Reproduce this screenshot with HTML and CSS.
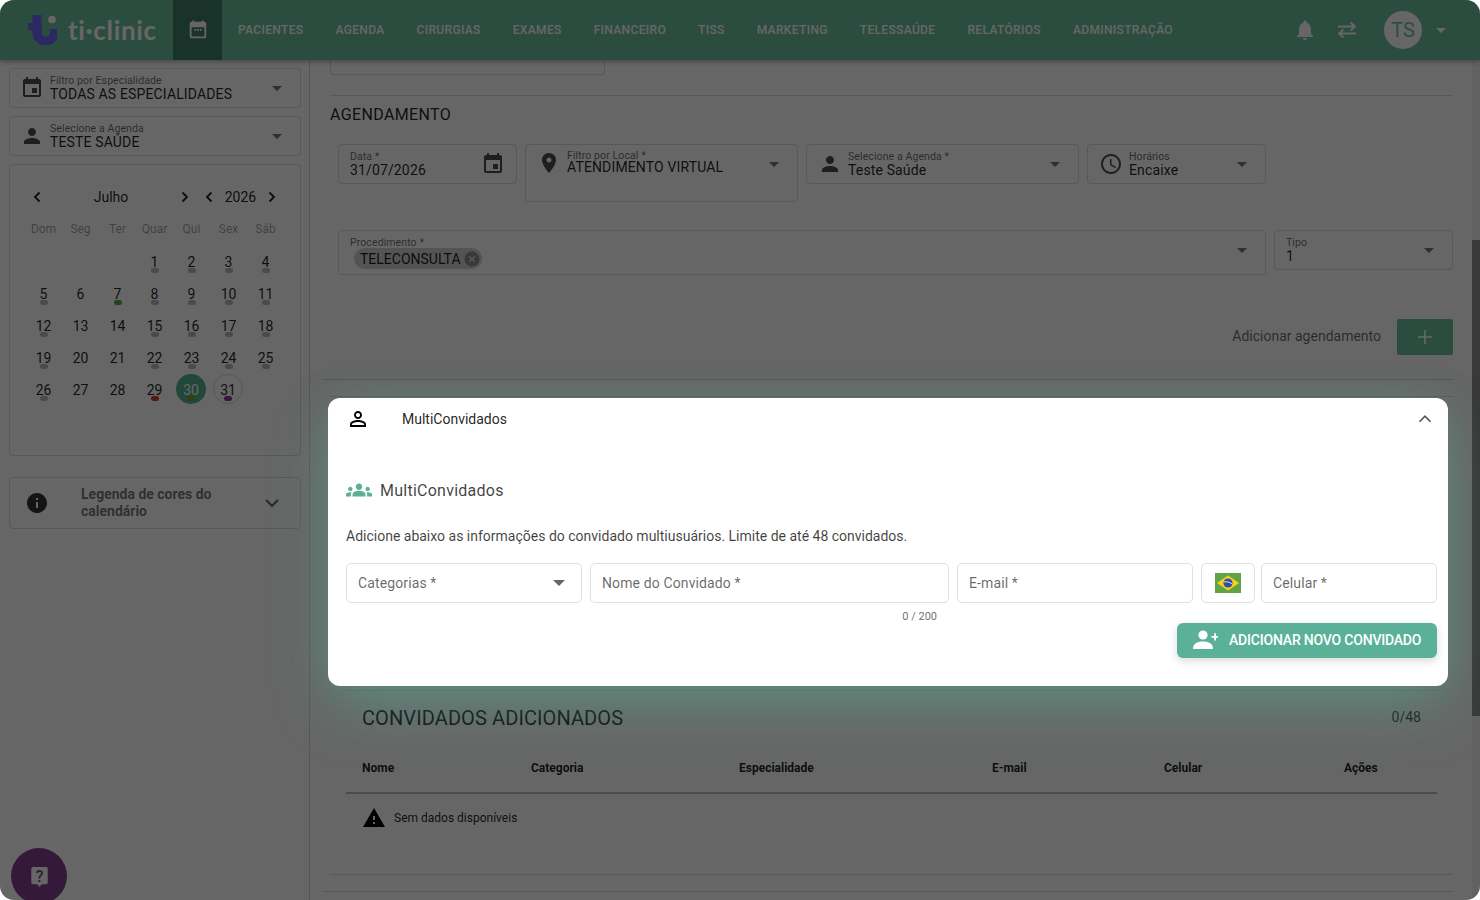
FILE: index.html
```html
<!DOCTYPE html>
<html lang="pt-BR">
<head>
<meta charset="utf-8">
<title>ti-clinic</title>
<link rel="stylesheet" href="styles.css">
</head>
<body>
<svg class="sprite" aria-hidden="true">
  <symbol id="i-event" viewBox="0 0 24 24"><path d="M17 12h-5v5h5v-5zM16 1v2H8V1H6v2H5c-1.11 0-1.99.9-1.99 2L3 19c0 1.1.89 2 2 2h14c1.1 0 2-.9 2-2V5c0-1.1-.9-2-2-2h-1V1h-2zm3 18H5V8h14v11z"/></symbol>
  <symbol id="i-person" viewBox="0 0 24 24"><path d="M12 12c2.21 0 4-1.79 4-4s-1.79-4-4-4-4 1.79-4 4 1.79 4 4 4zm0 2c-2.67 0-8 1.34-8 4v2h16v-2c0-2.66-5.33-4-8-4z"/></symbol>
  <symbol id="i-person-o" viewBox="0 0 24 24"><path d="M12 5.9c1.16 0 2.1.94 2.1 2.1s-.94 2.1-2.1 2.1S9.9 9.16 9.9 8s.94-2.1 2.1-2.1m0 9c2.97 0 6.1 1.46 6.1 2.1v1.1H5.9V17c0-.64 3.13-2.1 6.1-2.1M12 4C9.79 4 8 5.79 8 8s1.79 4 4 4 4-1.79 4-4-1.79-4-4-4zm0 9c-2.67 0-8 1.34-8 4v3h16v-3c0-2.66-5.33-4-8-4z"/></symbol>
  <symbol id="i-pin" viewBox="0 0 24 24"><path d="M12 2C8.13 2 5 5.13 5 9c0 5.25 7 13 7 13s7-7.75 7-13c0-3.87-3.13-7-7-7zm0 9.5c-1.38 0-2.5-1.12-2.5-2.5s1.12-2.5 2.5-2.5 2.5 1.12 2.5 2.5-1.12 2.5-2.5 2.5z"/></symbol>
  <symbol id="i-clock" viewBox="0 0 24 24"><path d="M11.99 2C6.47 2 2 6.48 2 12s4.47 10 9.99 10C17.52 22 22 17.52 22 12S17.52 2 11.99 2zM12 20c-4.42 0-8-3.58-8-8s3.58-8 8-8 8 3.58 8 8-3.58 8-8 8zm.5-13H11v6l5.25 3.15.75-1.23-4.5-2.67z"/></symbol>
  <symbol id="i-left" viewBox="0 0 24 24"><path d="M14.500 7.500 10 12l4.500 4.500" fill="none" stroke="currentColor" stroke-width="1.800"/></symbol>
  <symbol id="i-right" viewBox="0 0 24 24"><path d="M9.500 7.500 14 12l-4.500 4.500" fill="none" stroke="currentColor" stroke-width="1.800"/></symbol>
</svg>

<div class="app">
  <header class="nav">
    <div class="logo">
      <svg class="logo-mark" viewBox="0 0 30 30">
        <path d="M10 0V17.500a8.700 8.700 0 0 0 17.400 0V14" fill="none" stroke="#7064f5" stroke-width="9"/>
        <path d="M1 11.500H15" fill="none" stroke="#7064f5" stroke-width="7"/>
        <circle cx="25" cy="4.500" r="3.800" fill="#fff"/>
      </svg>
      <span class="logo-text">ti·clinic</span>
    </div>
    <div class="nav-cal"><svg class="ic22" viewBox="0 0 24 24" fill="#fff"><path d="M19 3h-1V1.500h-2V3H8V1.500H6V3H5a2 2 0 0 0-2 2v14a2 2 0 0 0 2 2h14a2 2 0 0 0 2-2V5a2 2 0 0 0-2-2zm0 16H5V9h14v10zM8 11h2v1.800H8zm3 0h2v1.800h-2zm3 0h2v1.800h-2z"/></svg></div>
    <nav class="nav-links">
      <a>PACIENTES</a><a>AGENDA</a><a>CIRURGIAS</a><a>EXAMES</a><a>FINANCEIRO</a><a>TISS</a><a>MARKETING</a><a>TELESSAÚDE</a><a>RELATÓRIOS</a><a>ADMINISTRAÇÃO</a>
    </nav>
    <div class="nav-right">
      <svg class="ic24 bell" viewBox="0 0 24 24"><path d="M12 22c1.100 0 2-.9 2-2h-4c0 1.100.89 2 2 2zm6-6v-5c0-3.070-1.640-5.640-4.500-6.320V4c0-.83-.67-1.500-1.500-1.500s-1.500.67-1.500 1.500v.68C7.630 5.360 6 7.920 6 11v5l-2 2v1h16v-1l-2-2z"/></svg>
      <svg class="ic24 swap" viewBox="0 0 24 24"><path d="M3 8.500h17M15.500 4.500l4.500 4-4.500 4M21 15.500H4M8.500 11.500l-4.500 4 4.500 4"/></svg>
      <div class="avatar">TS</div>
      <span class="caret caret-light"></span>
    </div>
  </header>

  <div class="body-row">
    <aside class="side">
      <div class="field side-field">
        <svg class="ic24 field-ic"><use href="#i-event"/></svg>
        <div class="field-txt"><span class="lbl">Filtro por Especialidade</span><span class="val">TODAS AS ESPECIALIDADES</span></div>
        <span class="caret"></span>
      </div>
      <div class="field side-field">
        <svg class="ic24 field-ic"><use href="#i-person"/></svg>
        <div class="field-txt"><span class="lbl">Selecione a Agenda</span><span class="val">TESTE SAÚDE</span></div>
        <span class="caret"></span>
      </div>

      <section class="cal">
        <div class="cal-head">
          <svg class="ic24"><use href="#i-left"/></svg><span>Julho</span><svg class="ic24"><use href="#i-right"/></svg><svg class="ic24"><use href="#i-left"/></svg><span>2026</span><svg class="ic24"><use href="#i-right"/></svg>
        </div>
        <div class="cal-week"><span>Dom</span><span>Seg</span><span>Ter</span><span>Quar</span><span>Qui</span><span>Sex</span><span>Sáb</span></div>
        <div class="cal-days">
          <div></div><div></div><div></div>
          <div class="day">1<i class="dot"></i></div><div class="day">2<i class="dot"></i></div><div class="day">3<i class="dot"></i></div><div class="day">4<i class="dot"></i></div>
          <div class="day">5<i class="dot"></i></div><div class="day">6</div><div class="day">7<i class="dot dot-green"></i></div><div class="day">8<i class="dot"></i></div><div class="day">9<i class="dot"></i></div><div class="day">10<i class="dot"></i></div><div class="day">11<i class="dot"></i></div>
          <div class="day">12<i class="dot"></i></div><div class="day">13</div><div class="day">14</div><div class="day">15<i class="dot"></i></div><div class="day">16<i class="dot"></i></div><div class="day">17<i class="dot"></i></div><div class="day">18<i class="dot"></i></div>
          <div class="day">19<i class="dot"></i></div><div class="day">20</div><div class="day">21</div><div class="day">22<i class="dot"></i></div><div class="day">23<i class="dot"></i></div><div class="day">24<i class="dot"></i></div><div class="day">25<i class="dot"></i></div>
          <div class="day">26<i class="dot"></i></div><div class="day">27</div><div class="day">28</div><div class="day">29<i class="dot dot-red"></i></div><div class="day day-today">30<i class="dot dot-olive"></i></div><div class="day day-sel">31<i class="dot dot-purple"></i></div>
        </div>
      </section>

      <div class="legend">
        <svg class="ic24 legend-ic" viewBox="0 0 24 24"><path d="M12 2C6.480 2 2 6.480 2 12s4.480 10 10 10 10-4.480 10-10S17.520 2 12 2zm1 15h-2v-6h2v6zm0-8h-2V7h2v2z"/></svg>
        <span class="legend-txt">Legenda de cores do calendário</span>
        <svg class="legend-chev" viewBox="0 0 24 24" fill="none" stroke="currentColor" stroke-width="2"><path d="M6 9l6 6 6-6"/></svg>
      </div>
    </aside>

    <main class="main">
      <div class="stub"></div>
      <hr class="rule rule-first">
      <h2 class="sec-title">AGENDAMENTO</h2>

      <div class="form-row form-row-1">
        <div class="field w179">
          <div class="field-txt"><span class="lbl">Data *</span><span class="val">31/07/2026</span></div>
          <svg class="ic24 date-ic"><use href="#i-event"/></svg>
        </div>
        <div class="field w273 field-tall">
          <svg class="ic24 pin-ic"><use href="#i-pin"/></svg>
          <div class="field-txt"><span class="lbl lbl-tight">Filtro por Local *</span><span class="val val-tight">ATENDIMENTO VIRTUAL</span></div>
          <span class="caret caret-high"></span>
        </div>
        <div class="field w273">
          <svg class="ic24 pin-ic"><use href="#i-person"/></svg>
          <div class="field-txt"><span class="lbl">Selecione a Agenda *</span><span class="val">Teste Saúde</span></div>
          <span class="caret"></span>
        </div>
        <div class="field w179">
          <svg class="ic24 pin-ic"><use href="#i-clock"/></svg>
          <div class="field-txt"><span class="lbl">Horários</span><span class="val">Encaixe</span></div>
          <span class="caret"></span>
        </div>
      </div>

      <div class="form-row form-row-2">
        <div class="field proc">
          <div class="field-txt"><span class="lbl">Procedimento *</span>
            <span class="chip">TELECONSULTA<svg class="chip-x" viewBox="0 0 16 16"><circle cx="8" cy="8" r="7.500" fill="#8d8d8d"/><path d="M5.200 5.200l5.600 5.600M10.800 5.200l-5.600 5.600" stroke="#ddd" stroke-width="1.400"/></svg></span>
          </div>
          <span class="caret"></span>
        </div>
        <div class="field w179">
          <div class="field-txt"><span class="lbl">Tipo</span><span class="val">1</span></div>
          <span class="caret"></span>
        </div>
      </div>

      <div class="add-row">
        <span class="add-txt">Adicionar agendamento</span>
        <button class="add-btn"><svg class="ic24" viewBox="0 0 24 24" fill="none" stroke="#fff" stroke-width="1.600"><path d="M12 5v14M5 12h14"/></svg></button>
      </div>

      <hr class="rule rule-wide rule-a">
      <hr class="rule rule-b">

      <section class="card">
        <hr class="rule rule-card">
        <div class="card-head">
          <h3>CONVIDADOS ADICIONADOS</h3>
          <span class="count">0/48</span>
        </div>
        <div class="tbl-head"><span>Nome</span><span>Categoria</span><span>Especialidade</span><span>E-mail</span><span>Celular</span><span>Ações</span></div>
        <div class="tbl-empty">
          <svg class="ic24 warn" viewBox="0 0 24 24"><path d="M1 21h22L12 2 1 21zm12-3h-2v-2h2v2zm0-4h-2v-4h2v4z"/></svg>
          <span>Sem dados disponíveis</span>
        </div>
      </section>
      <hr class="rule rule-c">
      <hr class="rule rule-wide rule-d">
    </main>

    <div class="scrollbar"><div class="thumb"></div></div>
  </div>

  <button class="fab" aria-label="Ajuda">
    <svg viewBox="0 0 20 24" class="fab-ic"><path d="M3 1h14a2 2 0 0 1 2 2v15a2 2 0 0 1-2 2h-4.500L10 23l-2.500-3H3a2 2 0 0 1-2-2V3a2 2 0 0 1 2-2z" fill="#fff"/><text x="10" y="17" text-anchor="middle" class="fab-q">?</text></svg>
  </button>

  <div class="overlay"></div>

  <div class="modal">
    <div class="modal-head">
      <svg class="ic24 modal-person"><use href="#i-person-o"/></svg>
      <span class="modal-head-txt">MultiConvidados</span>
      <svg class="modal-chev" viewBox="0 0 24 24" fill="none" stroke="#555" stroke-width="1.800"><path d="M6 15l6-6 6 6"/></svg>
    </div>
    <div class="modal-body">
      <div class="modal-title">
        <svg class="groups" viewBox="0 0 24 24" fill="#5bb197"><path d="M4 13c1.100 0 2-.9 2-2 0-1.100-.9-2-2-2s-2 .9-2 2c0 1.100.9 2 2 2zm1.130 1.100C4.760 14.040 4.390 14 4 14c-.99 0-1.930.21-2.780.58C.48 14.900 0 15.620 0 16.430V18h4.500v-1.610c0-.83.23-1.610.63-2.290zM20 13c1.100 0 2-.9 2-2 0-1.100-.9-2-2-2s-2 .9-2 2c0 1.100.9 2 2 2zm4 3.430c0-.81-.48-1.530-1.220-1.850C21.930 14.210 20.990 14 20 14c-.39 0-.76.04-1.130.1.4.68.63 1.460.63 2.290V18H24v-1.570zM16.240 13.650c-1.170-.52-2.610-.9-4.240-.9-1.630 0-3.070.39-4.240.9C6.680 14.130 6 15.210 6 16.390V18h12v-1.610c0-1.180-.68-2.260-1.760-2.740zM12 12c1.660 0 3-1.340 3-3s-1.340-3-3-3-3 1.340-3 3 1.340 3 3 3z"/></svg>
        <span>MultiConvidados</span>
      </div>
      <p class="modal-desc">Adicione abaixo as informações do convidado multiusuários. Limite de até 48 convidados.</p>
      <div class="invite-row">
        <div class="input w236"><span>Categorias *</span><span class="caret caret-dark"></span></div>
        <div class="input w359"><span>Nome do Convidado *</span></div>
        <div class="input w236"><span>E-mail *</span></div>
        <div class="input flag-box">
          <svg class="flag" viewBox="0 0 26 20"><rect width="26" height="20" fill="#5fa548"/><path d="M13 2.500 24 10 13 17.500 2 10z" fill="#fcd116"/><circle cx="13" cy="10" r="4.600" fill="#2f4fa8"/><path d="M8.700 9c3-.6 6-.1 8.500 1.900" stroke="#fff" stroke-width=".8" fill="none"/></svg>
        </div>
        <div class="input w176"><span>Celular *</span></div>
      </div>
      <div class="counter-row"><span class="counter">0 / 200</span></div>
      <div class="btn-row">
        <button class="invite-btn">
          <svg class="invite-ic" viewBox="0 0 25 20" fill="#fff"><circle cx="10" cy="5" r="4.600"/><path d="M0 19c0-5.500 4-7.500 10-7.500s10 2 10 7.500z"/><path d="M18.500 6h2.700V3.300h1.800V6h2v1.800h-2v2.700h-1.800V7.800h-2.700z"/></svg>
          ADICIONAR NOVO CONVIDADO
        </button>
      </div>
    </div>
  </div>
</div>
</body>
</html>
```

FILE: styles.css
```css
* { box-sizing: border-box; }
html, body { margin: 0; padding: 0; background: #fff; }
body { width: 1480px; height: 900px; overflow: hidden; font-family: Roboto, "Liberation Sans", sans-serif; color: rgba(0,0,0,.87); }
.sprite { display: none; }
.ic24 { width: 24px; height: 24px; flex: none; display: block; fill: currentColor; }
.ic22 { width: 22px; height: 22px; display: block; }

.app { position: relative; width: 1480px; height: 900px; overflow: hidden; border-radius: 14px; background: #fff; display: flex; flex-direction: column; }

/* nav */
.nav { height: 60px; flex: none; display: flex; align-items: center; background: #6bc0a0; box-shadow: 0 2px 5px rgba(0,0,0,.3); position: relative; z-index: 1; }
.logo { width: 173px; height: 60px; display: flex; align-items: center; padding-left: 27px; gap: 11px; }
.logo-mark { width: 30px; height: 30px; flex: none; }
.logo-text { font-family: Lato, sans-serif; font-weight: 700; font-size: 26px; color: #fff; letter-spacing: .65px; line-height: 1; }
.nav-cal { width: 49px; height: 60px; background: #41806a; display: flex; align-items: center; justify-content: center; }
.nav-links { display: flex; }
.nav-links a { padding: 0 16px; font-size: 12px; font-weight: 500; letter-spacing: .345px; color: #fff; line-height: 60px; white-space: nowrap; }
.nav-right { margin-left: auto; display: flex; align-items: center; padding-right: 34px; }
.bell { margin-right: 18px; fill: #fff; }
.swap { margin-right: 25px; fill: none; stroke: #fff; stroke-width: 1.8; }
.avatar { width: 38px; height: 38px; border-radius: 50%; background: #fff; color: #6bc0a0; font-size: 20px; display: flex; align-items: center; justify-content: center; margin-right: 14px; }
.caret { width: 0; height: 0; border-left: 5px solid transparent; border-right: 5px solid transparent; border-top: 5px solid rgba(0,0,0,.54); flex: none; margin-left: auto; }
.caret-light { border-top-color: #fff; margin-left: 0; }

/* layout */
.body-row { flex: 1; display: flex; min-height: 0; }
.side { width: 310px; flex: none; border-right: 1px solid #d9d9d9; padding: 8px 8px 0 9px; }
.main { flex: 1; min-width: 0; padding: 0 19px 0 20px; }
.scrollbar { width: 8px; flex: none; background: #f4f4f4; }
.thumb { margin-top: 180px; height: 476px; background: #8e8e8e; }

/* fields */
.field { display: flex; align-items: center; height: 40px; border: 1px solid #dcdcdc; border-radius: 4px; padding: 0 18px 0 11px; flex: none; }
.field-txt { display: flex; flex-direction: column; min-width: 0; }
.lbl { font-size: 10.5px; letter-spacing: .1px; line-height: 14px; color: rgba(0,0,0,.6); white-space: nowrap; }
.val { font-size: 14px; line-height: 16px; margin-top: -2px; letter-spacing: .14px; white-space: nowrap; }
.lbl-tight { line-height: 12px; }
.val-tight { margin-top: 0; line-height: 10px; }
.side-field { width: 292px; margin-bottom: 8px; padding-left: 10px; padding-right: 18px; }
.field-ic { margin-right: 6px; color: rgba(0,0,0,.7); }
.w179 { width: 179px; }
.w273 { width: 273px; }
.date-ic { margin-left: auto; margin-right: -7px; color: rgba(0,0,0,.7); }
.pin-ic { margin-right: 6px; color: rgba(0,0,0,.7); }
.field-tall { height: 58px; align-items: flex-start; padding-top: 5px; }
.field-tall .pin-ic { margin-top: 1px; }
.caret-high { margin-top: 12px; }

/* calendar */
.cal { width: 292px; height: 292px; border: 1px solid #dcdcdc; border-radius: 4px; padding: 20px 0 0 15px; }
.cal-head { display: grid; grid-template-columns: 24px 124px 24px 24px 39px 24px; align-items: center; height: 24px; font-size: 14px; }
.cal-head span { text-align: center; }
.cal-week { display: grid; grid-template-columns: repeat(7, 37px); margin-top: 12px; font-size: 12px; line-height: 16px; color: rgba(0,0,0,.38); text-align: center; }
.cal-days { display: grid; grid-template-columns: repeat(7, 37px); grid-auto-rows: 32px; margin-top: 9px; font-size: 14px; }
.day { display: flex; flex-direction: column; align-items: center; padding-top: 8px; line-height: 16px; }
.dot { display: block; width: 8px; height: 5px; border-radius: 3px; margin-top: -2px; background: #b0bcc6; }
.dot-green { background: #5aa845; }
.dot-red { background: #d9402f; }
.dot-purple { background: #8e3aa0; }
.dot-olive { background: #7ea020; }
.day-today, .day-sel { width: 30px; height: 30px; justify-self: start; margin-left: 3px; border-radius: 50%; }
.day-today { background: #5bb197; color: #fff; }
.day-sel { border: 1px solid #dcdcdc; padding-top: 7px; }

.legend { margin-top: 21px; width: 292px; height: 52px; border: 1px solid #dcdcdc; border-radius: 4px; display: flex; align-items: center; padding: 0 16px 0 15px; }
.legend-ic { margin-right: 32px; color: rgba(0,0,0,.8); }
.legend-txt { flex: 1; font-size: 14px; font-weight: 700; line-height: 17px; color: rgba(0,0,0,.55); max-width: 140px; }
.legend-chev { width: 24px; height: 24px; margin-left: auto; color: rgba(0,0,0,.6); flex: none; }

/* main */
.stub { width: 275px; height: 15px; border: 1px solid #dcdcdc; border-top: 0; border-radius: 0 0 4px 4px; }
.rule { border: 0; height: 1px; background: #dcdcdc; margin: 0; }
.rule-first { margin-top: 20px; }
.sec-title { margin: 9px 0 0; font-size: 16px; line-height: 20px; font-weight: 400; letter-spacing: .36px; }
.form-row { display: flex; gap: 8px; padding-left: 8px; align-items: flex-start; }
.form-row-1 { margin-top: 19px; height: 58px; }
.form-row-2 { margin-top: 28px; }
.proc { width: 928px; height: 45px; align-items: flex-start; padding-top: 5px; padding-right: 18px; }
.proc .caret { margin-top: 12px; }
.chip { display: inline-flex; align-items: center; align-self: flex-start; height: 21px; margin: -2px 0 0 4px; padding: 0 2px 0 6px; border-radius: 11px; background: #d2d2d2; font-size: 14px; }
.chip-x { width: 16px; height: 16px; margin-left: 3px; }
.add-row { margin-top: 44px; display: flex; justify-content: flex-end; align-items: center; height: 36px; }
.add-txt { font-size: 14px; color: rgba(0,0,0,.6); margin: -2px 16px 0 0; }
.add-btn { width: 56px; height: 36px; border: 0; border-radius: 2px; background: #6bc0a0; display: flex; align-items: center; justify-content: center; padding: 0; }
.rule-wide { margin-left: -8px; }
.rule-a { margin-top: 24px; }
.rule-b { margin-top: 16px; }
.card { height: 477px; padding: 293px 16px 0; }
.card-head { display: flex; justify-content: space-between; align-items: center; margin-top: 15px; padding: 0 16px; height: 24px; }
.card-head h3 { margin: 0; font-size: 20px; font-weight: 400; line-height: 24px; letter-spacing: .1px; }
.count { font-size: 14px; color: rgba(0,0,0,.75); margin-top: -2px; }
.tbl-head { margin-top: 26px; height: 38px; padding: 4px 0 0 16px; display: grid; grid-template-columns: 169px 208px 253px 172px 180px auto; font-size: 12px; font-weight: 700; line-height: 16px; border-bottom: 2px solid #bdbdbd; }
.tbl-empty { display: flex; align-items: center; gap: 8px; padding: 12px 16px 0; font-size: 12px; }
.warn { color: #000; }
.rule-d { margin-top: 16px; }

/* fab + overlay */
.fab { position: absolute; left: 11px; top: 848px; width: 56px; height: 56px; border-radius: 50%; border: 0; background: #853f94; padding: 18px 0 0; display: flex; justify-content: center; }
.fab-ic { width: 19px; height: 22px; display: block; }
.fab-q { font-family: Roboto, sans-serif; font-size: 18px; font-weight: 500; fill: #853f94; }
.overlay { position: absolute; inset: 0; z-index: 2; background: rgba(0,0,0,.6); }

/* modal */
.modal { position: absolute; z-index: 3; left: 328px; top: 398px; width: 1120px; height: 288px; background: #fff; border-radius: 12px; box-shadow: 0 24px 60px -6px rgba(91,177,151,.45), 0 0 40px -4px rgba(91,177,151,.25); }
.modal-head { display: flex; align-items: center; height: 42px; padding: 0 11px 0 18px; }
.modal-person { margin-right: 32px; color: #000; }
.modal-head-txt { font-size: 14px; }
.modal-chev { width: 22px; height: 22px; margin-left: auto; margin-right: 1px; }
.modal-body { padding: 0 11px 0 18px; }
.modal-title { display: flex; align-items: center; margin-top: 36px; height: 28px; gap: 8px; font-size: 16px; letter-spacing: .25px; color: rgba(0,0,0,.75); }
.groups { width: 26px; height: 26px; flex: none; }
.modal-desc { margin: 22px 0 0; font-size: 14px; line-height: 20px; color: rgba(0,0,0,.75); }
.invite-row { display: flex; gap: 8px; margin-top: 17px; }
.input { height: 40px; border: 1px solid #e0e0e0; border-radius: 5px; display: flex; align-items: center; padding: 0 11px; font-size: 14px; letter-spacing: .12px; color: rgba(0,0,0,.6); flex: none; }
.w236 { width: 236px; }
.w359 { width: 359px; }
.w176 { width: 176px; margin-left: -2px; }
.flag-box { width: 54px; justify-content: center; padding: 0; }
.flag { width: 26px; height: 20px; display: block; }
.caret-dark { border-left-width: 6px; border-right-width: 6px; border-top: 6px solid rgba(0,0,0,.6); margin-right: 5px; }
.counter-row { display: flex; justify-content: flex-end; height: 20px; padding: 7px 500px 0 0; }
.counter { font-size: 11px; line-height: 13px; color: rgba(0,0,0,.6); }
.btn-row { display: flex; justify-content: flex-end; }
.invite-btn { width: 260px; height: 35px; border: 0; border-radius: 6px; background: #5bb197; color: #fff; font-family: Roboto, sans-serif; font-size: 14px; letter-spacing: -.2px; font-weight: 500; display: flex; align-items: center; padding: 0 0 1px 16px; gap: 11px; box-shadow: 0 3px 8px rgba(0,0,0,.15); white-space: nowrap; }
.invite-ic { width: 25px; height: 20px; flex: none; }
```
